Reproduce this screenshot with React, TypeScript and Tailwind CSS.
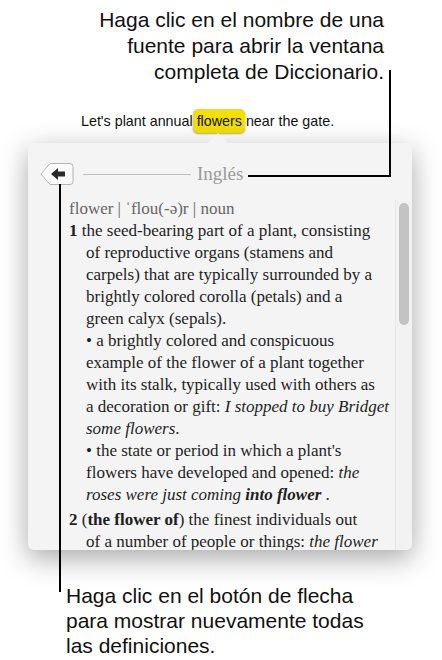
import React from "react";

const sans = { fontFamily: '"Liberation Sans", Arial, sans-serif' };
const serif = { fontFamily: '"Liberation Serif", "Times New Roman", serif' };

function L({ children, indent = true, cls = "" }: { children: React.ReactNode; indent?: boolean; cls?: string }) {
  return <div className={`h-[22px] leading-[22px] whitespace-nowrap ${indent ? "pl-[17px]" : ""} ${cls}`}>{children}</div>;
}

export default function App() {
  return (
    <div className="relative w-[442px] h-[660px] bg-white overflow-hidden text-black" style={sans}>
      {/* top callout */}
      <div className="pt-[7px] pr-[58px] text-right text-[21px] leading-[26px] text-[#111]">
        <div>Haga clic en el nombre de una</div>
        <div>fuente para abrir la ventana</div>
        <div>completa de Diccionario.</div>
      </div>

      {/* sentence */}
      <div className="mt-[25px] pl-[81px] text-[14.3px] leading-[22px] text-[#111] whitespace-nowrap">
        Let's plant annual{" "}
        <span className="relative inline-block">
          <span className="absolute -left-[4px] -right-[3px] top-[-1px] bottom-[-1px] rounded-[5px] bg-[#f3df00] shadow-[0_1px_2px_rgba(0,0,0,0.35)]" />
          <span className="relative">flowers</span>
        </span>{" "}
        near the gate.
      </div>

      {/* popover */}
      <div className="relative ml-[28px] mt-[11px] w-[384px] h-[407px] rounded-[6px] bg-[#f4f4f4] shadow-[0_8px_28px_rgba(0,0,0,0.35)]">
        <div className="absolute left-[182px] top-[-7px] w-[16px] h-[16px] rotate-45 bg-[#f4f4f4]" />
        <div className="relative h-full overflow-hidden rounded-[6px]">
          {/* header */}
          <div className="flex items-center pt-[18px] pl-[12px] h-[44px]">
            <svg width="34" height="26" viewBox="0 0 34 26">
              <path d="M1 13 L10 2.5 H30 A3 3 0 0 1 33 5.5 V20.5 A3 3 0 0 1 30 23.5 H10 Z" fill="#fbfbfb" stroke="#b4b4b4" strokeWidth="1" />
              <path d="M11 13 L18 7 V10.5 H25 V15.5 H18 V19 Z" fill="#2a2a2a" />
            </svg>
            <div className="ml-[9px] w-[108px] h-px bg-[#bdbdbd]" />
            <div className="ml-[6px] text-[19px] leading-[22px] text-[#9a9a9a]" style={serif}>Inglés</div>
          </div>
          {/* body */}
          <div className="pt-[11px] pl-[41px] text-[17px] text-[#1e1e1e]" style={serif}>
            <L indent={false} cls="text-[#666]">flower | ˈflou(-ə)r | noun</L>
            <L indent={false}><b>1</b> the seed-bearing part of a plant, consisting</L>
            <L>of reproductive organs (stamens and</L>
            <L>carpels) that are typically surrounded by a</L>
            <L>brightly colored corolla (petals) and a</L>
            <L>green calyx (sepals).</L>
            <L>• a brightly colored and conspicuous</L>
            <L>example of the flower of a plant together</L>
            <L>with its stalk, typically used with others as</L>
            <L>a decoration or gift: <i>I stopped to buy Bridget</i></L>
            <L><i>some flowers</i>.</L>
            <L>• the state or period in which a plant's</L>
            <L>flowers have developed and opened: <i>the</i></L>
            <L><i>roses were just coming</i> <b><i>into flower</i></b> .</L>
            <div className="h-[3px]" />
            <L indent={false}><b>2</b> (<b>the flower of</b>) the finest individuals out</L>
            <L>of a number of people or things: <i>the flower</i></L>
          </div>
          {/* scrollbar */}
          <div className="absolute right-0 top-[57px] bottom-0 w-[17px] border-l border-[#e6e6e6] bg-[#f2f2f2]">
            <div className="ml-[3px] mt-[3px] w-[10px] h-[122px] rounded-full bg-[#c3c3c3]" />
          </div>
        </div>
      </div>

      {/* bottom callout */}
      <div className="mt-[33px] pl-[66px] text-[21px] leading-[25px] text-[#111]">
        <div>Haga clic en el botón de flecha</div>
        <div>para mostrar nuevamente todas</div>
        <div>las definiciones.</div>
      </div>

      {/* annotation lines */}
      <div className="absolute left-[389px] top-[70px] w-[2px] h-[107px] bg-black" />
      <div className="absolute left-[248px] top-[175px] w-[143px] h-[2px] bg-black" />
      <div className="absolute left-[59px] top-[184px] w-[2px] h-[408px] bg-black" />
    </div>
  );
}
